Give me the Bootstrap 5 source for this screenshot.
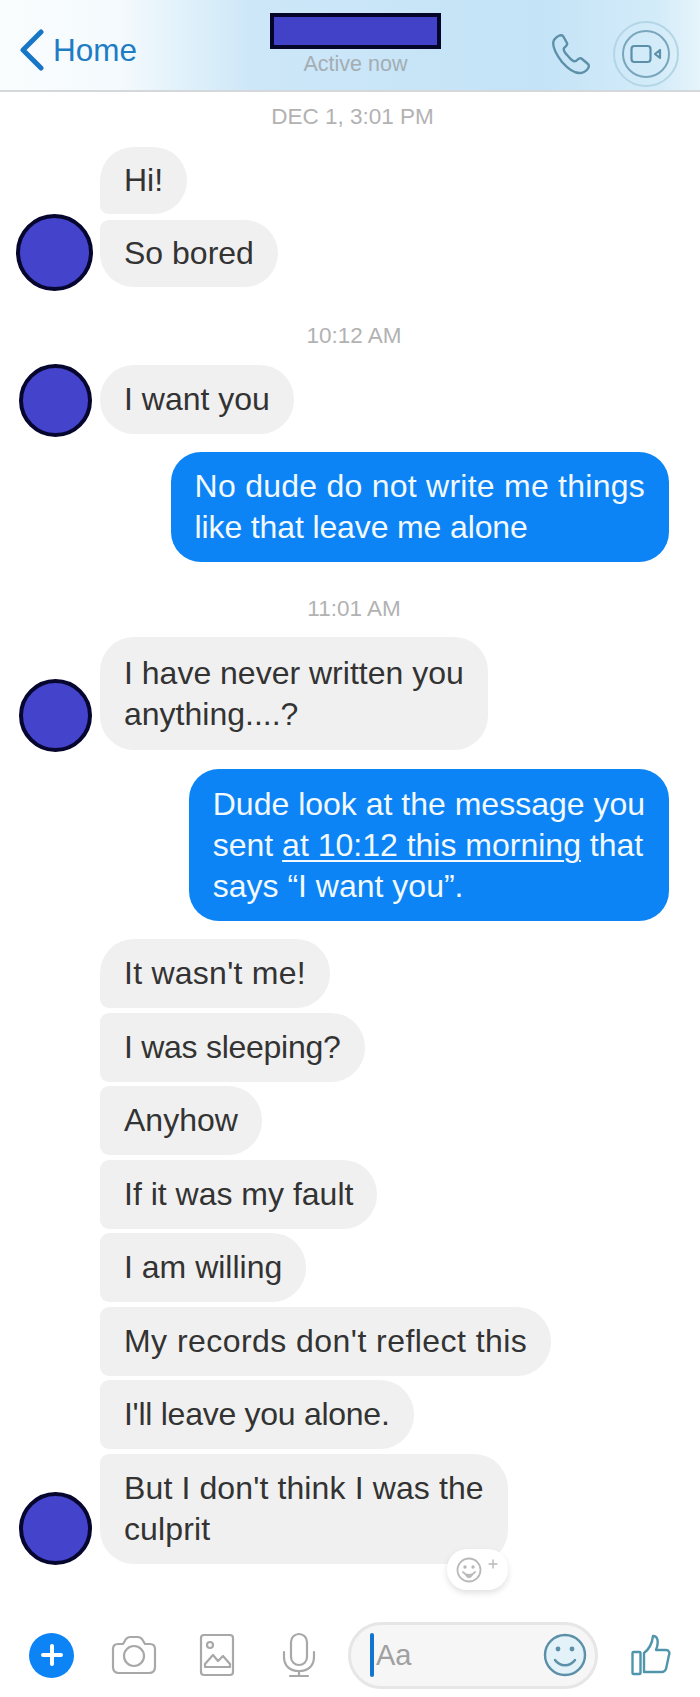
<!DOCTYPE html>
<html lang="en">
<head>
    <meta charset="UTF-8">
    <meta name="viewport" content="width=device-width, initial-scale=1.0">
    <title>Chat</title>
    <link href="https://cdn.jsdelivr.net/npm/bootstrap@5.3.3/dist/css/bootstrap.min.css" rel="stylesheet">
    <style>
        html, body { margin: 0; padding: 0; }
        body {
            width: 700px;
            height: 1697px;
            overflow: hidden;
            background: #fff;
            font-family: "Liberation Sans", Arial, sans-serif;
            font-size: 32px;
            line-height: 41px;
            color: #333;
        }

        /* Header */
        .chat-head {
            height: 92px;
            border-bottom: 2px solid #d4d8da;
            background: linear-gradient(90deg, #fafdfe 0, #f4fafd 120px, #cde7f8 250px, #c4e3f7 540px, #d4ecf9 660px, #e6f4fb 700px);
            padding: 0 21px 0 19px;
        }
        .back-link { color: #1d7cc4; font-size: 31.5px; line-height: 36px; width: 251px; height: 100px; }
        .name-col { width: 171px; }
        .name-box { width: 171px; height: 36px; margin-top: 13px; background: #4242c8; border: 4px solid #05052a; }
        .active-txt { font-size: 21.5px; line-height: 26px; color: #a3adb3; margin-top: 2px; white-space: nowrap; }
        .call-tools { margin-top: 21px; }
        .video-ring { width: 66px; height: 66px; border: 2px solid #b3d5e6; border-radius: 50%; margin-left: 20px; }
        .video-inner { width: 48px; height: 48px; border: 2px solid #7aa6bd; border-radius: 50%; }

        /* Messages */
        .stamp { text-align: center; color: #b2b2b2; font-size: 22.5px; line-height: 24px; }
        .stamp-a { height: 55px; padding-top: 13px; padding-left: 5px; }
        .stamp-b { height: 78px; padding-top: 37px; padding-left: 8px; }
        .stamp-c { height: 75px; padding-top: 35px; padding-left: 8px; }
        .msg-row { padding-left: 100px; position: relative; }
        .msg-list { display: flex; flex-direction: column; gap: 4.5px; align-items: flex-start; }
        .msg-list-tight { gap: 6px; }
        .bub {
            background: #f0f0f0;
            padding: 14px 24px;
            border-radius: 34px;
            white-space: nowrap;
            position: relative;
        }
        .bub-tight { padding-top: 13px; padding-bottom: 13px; }
        .bub-two { padding-top: 16px; padding-bottom: 15px; }
        .bub-top { border-bottom-left-radius: 9px; }
        .bub-mid { border-top-left-radius: 9px; border-bottom-left-radius: 9px; }
        .bub-end { border-top-left-radius: 9px; }
        .ava {
            position: absolute;
            left: 19px;
            bottom: -3px;
            width: 73px;
            height: 73px;
            background: #4343cc;
            border: 4px solid #06062e;
            border-radius: 50%;
        }
        .ava-big { left: 16px; bottom: -4px; width: 77px; height: 77px; }
        .ava-low { bottom: -2px; }
        .ava-last { bottom: -1px; }
        .out-row { display: flex; justify-content: flex-end; padding-right: 31px; }
        .out-bub {
            background: #0d84f5;
            color: #f2f9ff;
            padding: 14px 24px;
            border-radius: 30px;
            white-space: nowrap;
        }
        .out-bub-tall { padding-top: 15px; }
        .out-bub u { text-underline-offset: 4px; text-decoration-thickness: 2px; }
        .gap-out-a { margin-top: 18px; }
        .gap-out-b { margin-top: 19px; }
        .gap-in { margin-top: 18px; }

        /* small width corrections, the original font runs a bit wider or narrower per line */
        .ls-p45 { letter-spacing: .45px; }
        .ls-p25 { letter-spacing: .25px; }
        .ls-p12 { letter-spacing: .12px; }
        .ls-m13 { letter-spacing: -.13px; }
        .ls-m27 { letter-spacing: -.27px; }

        .react-pill {
            position: absolute;
            right: 0;
            bottom: -26px;
            width: 61px;
            height: 41px;
            background: #fff;
            border-radius: 20px;
            box-shadow: 0 3px 6px rgba(0, 0, 0, .12);
            padding: 6px 0 0 7px;
            line-height: 0;
        }

        /* Bottom bar */
        .compose { margin-top: 58px; padding-left: 29px; height: 67px; }
        .plus-dot {
            width: 45px;
            height: 45px;
            border-radius: 50%;
            background: #0d84f5;
            color: #fff;
            margin-right: 37px;
        }
        .tool-a { margin-right: 42px; }
        .tool-b { margin-right: 47px; }
        .tool-c { margin-right: 32px; }
        .input-pill {
            width: 250px;
            height: 67px;
            border: 3px solid #e6e6e6;
            background: #f6f6f6;
            border-radius: 34px;
            padding: 0 8px 0 19px;
        }
        .caret-bar { width: 4px; height: 44px; background: #1274cf; border-radius: 2px; margin-right: 2px; }
        .aa-txt { font-size: 29px; color: #a0a0a0; line-height: 40px; }
        .thumb-wrap { margin-left: 33px; }
    </style>
</head>
<body>
    <header class="chat-head d-flex align-items-start">
        <div class="back-link d-flex align-items-center gap-2">
            <svg width="26" height="42" viewBox="0 0 26 42" fill="none" stroke="#1777c6" stroke-width="5" stroke-linecap="round" stroke-linejoin="round"><path d="M22 3 4 21l18 18"/></svg>
            <span>Home</span>
        </div>
        <div class="name-col d-flex flex-column align-items-center">
            <div class="name-box"></div>
            <div class="active-txt">Active now</div>
        </div>
        <div class="call-tools d-flex align-items-center ms-auto">
            <svg width="44" height="44" viewBox="0 0 44 44" fill="none" stroke="#5c8fa8" stroke-width="2.4" stroke-linejoin="round"><path d="M5 8c3-4 7-6 9-4l4 7c1 2-1 3-3 5-1 2 1 5 4 8 3 4 6 6 8 5 2-2 4-4 6-2l6 5c2 2 0 6-4 8-6 3-14-1-22-10C7 22 2 14 5 8Z"/></svg>
            <div class="video-ring d-flex align-items-center justify-content-center">
                <div class="video-inner d-flex align-items-center justify-content-center">
                    <svg width="32" height="20" viewBox="0 0 32 20" fill="none" stroke="#5c8fa8" stroke-width="2.2" stroke-linejoin="round"><rect x="1.5" y="2" width="19" height="16" rx="3"/><path d="m25 10 5-4v8z"/></svg>
                </div>
            </div>
        </div>
    </header>

    <main>
        <div class="stamp stamp-a">DEC 1, 3:01 PM</div>
        <div class="msg-row">
            <div class="msg-list msg-list-tight">
                <div class="bub bub-tight bub-top">Hi!</div>
                <div class="bub bub-tight bub-end">So bored</div>
            </div>
            <div class="ava ava-big"></div>
        </div>

        <div class="stamp stamp-b">10:12 AM</div>
        <div class="msg-row">
            <div class="msg-list"><div class="bub">I want you</div></div>
            <div class="ava"></div>
        </div>

        <div class="out-row gap-out-a">
            <div class="out-bub"><span class="ls-p25">No dude do not write me things</span><br><span class="ls-m13">like that leave me alone</span></div>
        </div>

        <div class="stamp stamp-c">11:01 AM</div>
        <div class="msg-row">
            <div class="msg-list"><div class="bub bub-two">I have never written you<br>anything....?</div></div>
            <div class="ava ava-low"></div>
        </div>

        <div class="out-row gap-out-b">
            <div class="out-bub out-bub-tall">Dude look at the message you<br>sent <u>at 10:12 this morning</u> that<br>says “I want you”.</div>
        </div>

        <div class="msg-row gap-in">
            <div class="msg-list">
                <div class="bub bub-top ls-p25">It wasn't me!</div>
                <div class="bub bub-mid ls-m27">I was sleeping?</div>
                <div class="bub bub-mid">Anyhow</div>
                <div class="bub bub-mid">If it was my fault</div>
                <div class="bub bub-mid">I am willing</div>
                <div class="bub bub-mid ls-p45">My records don't reflect this</div>
                <div class="bub bub-mid ls-m27">I'll leave you alone.</div>
                <div class="bub bub-end ls-p12">But I don't think I was the<br>culprit
                    <div class="react-pill">
                        <svg width="50" height="30" viewBox="0 0 50 30" fill="none" stroke="#b9b9b9" stroke-width="1.8" stroke-linecap="round"><circle cx="15" cy="15" r="11.5"/><circle cx="11" cy="12" r=".8"/><circle cx="19" cy="12" r=".8"/><path d="M9 17c3 4 9 4 12 0" /><path d="M12 20c2 3 4 3 6 0" fill="#b9b9b9"/><path d="M35 9h8M39 5v8" stroke-width="1.4"/></svg>
                    </div>
                </div>
            </div>
            <div class="ava ava-last"></div>
        </div>
    </main>

    <footer class="compose d-flex align-items-center">
        <div class="plus-dot d-flex align-items-center justify-content-center">
            <svg width="24" height="24" viewBox="0 0 24 24" stroke="#fff" stroke-width="4" stroke-linecap="round"><path d="M12 3v18M3 12h18"/></svg>
        </div>
        <svg class="tool-a" width="46" height="40" viewBox="0 0 46 40" fill="none" stroke="#a8a8a8" stroke-width="2.2" stroke-linejoin="round"><path d="M2 14c0-3 2-5 5-5h5l3-5c1-1 2-2 4-2h8c2 0 3 1 4 2l3 5h5c3 0 5 2 5 5v18c0 4-2 6-6 6H8c-4 0-6-2-6-6Z"/><circle cx="23" cy="21" r="10"/></svg>
        <svg class="tool-b" width="36" height="44" viewBox="0 0 36 44" fill="none" stroke="#a8a8a8" stroke-width="2.2" stroke-linejoin="round"><rect x="2" y="2" width="32" height="40" rx="3"/><circle cx="11" cy="12" r="3"/><path d="M6 34v-3l8-9 5 6 5-5 7 8v3Z"/></svg>
        <svg class="tool-c" width="34" height="46" viewBox="0 0 34 46" fill="none" stroke="#a8a8a8" stroke-width="2.2" stroke-linecap="round"><rect x="9" y="2" width="16" height="31" rx="8"/><path d="M2 20v5c0 9 6 14 15 14s15-5 15-14v-5M17 39v5M8 44h18"/></svg>
        <div class="input-pill d-flex align-items-center">
            <div class="caret-bar"></div>
            <span class="aa-txt">Aa</span>
            <svg class="ms-auto" width="44" height="44" viewBox="0 0 44 44" fill="#e3f1f8" stroke="#5c8fa8" stroke-width="2.4" stroke-linecap="round"><circle cx="22" cy="22" r="20"/><path d="M12 27c5 7 15 7 20 0" fill="none"/><circle cx="15" cy="16" r="1.2" fill="#5c8fa8"/><circle cx="29" cy="16" r="1.2" fill="#5c8fa8"/></svg>
        </div>
        <svg class="thumb-wrap" width="40" height="42" viewBox="0 0 40 42" fill="none" stroke="#4f96ad" stroke-width="2.4" stroke-linejoin="round"><rect x="1.5" y="18" width="8" height="22" rx="1"/><path d="M13 38V19c4-3 8-8 9-17 5 0 6 6 3 14h10c3 0 4 3 3 5l-3 14c-1 2-2 3-4 3Z"/></svg>
    </footer>
</body>
</html>
